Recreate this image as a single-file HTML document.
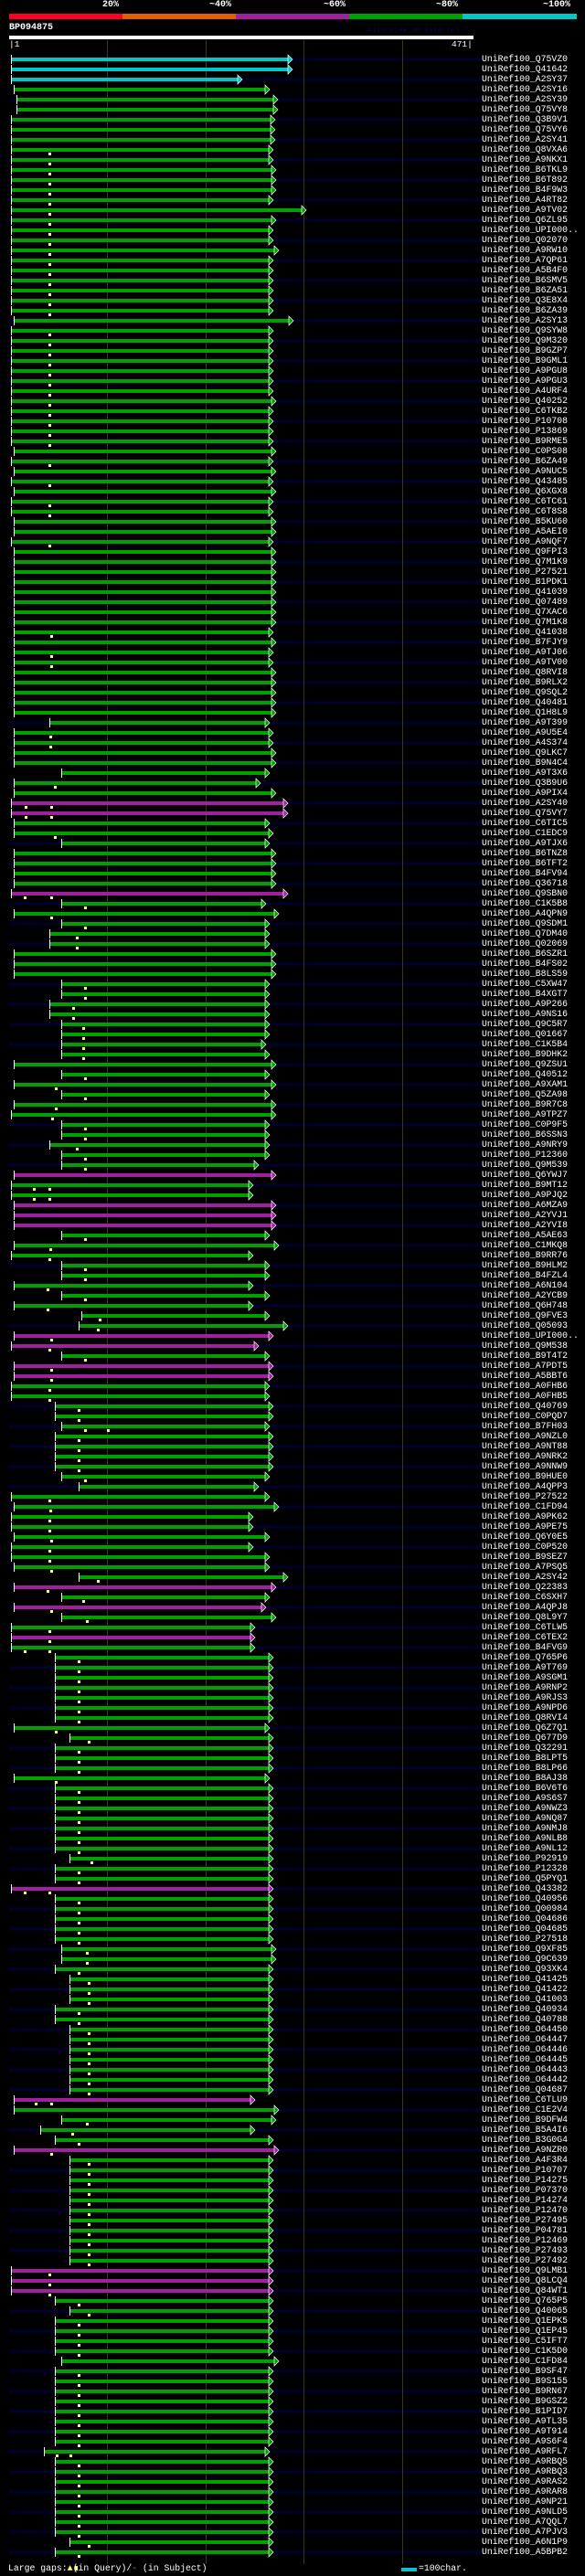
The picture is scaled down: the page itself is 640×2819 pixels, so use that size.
<!DOCTYPE html>
<html><head><meta charset="utf-8">
<style>
html,body{margin:0;padding:0;background:#000;}
body{width:640px;height:2819px;position:relative;overflow:hidden;font-family:"Liberation Mono",monospace;color:#fff;}
.t{position:absolute;white-space:nowrap;}
#labels{position:absolute;left:527px;top:59px;margin:0;font:9.8px/11px "Liberation Mono",monospace;color:#fff;}
svg{position:absolute;left:0;top:0;}
</style></head><body>
<svg id="s" width="640" height="2819" xmlns="http://www.w3.org/2000/svg"></svg>
<div class="t" style="left:112px;top:0px;font:bold 10px 'Liberation Mono',monospace;">20%</div>
<div class="t" style="left:229px;top:0px;font:bold 10px 'Liberation Mono',monospace;">~40%</div>
<div class="t" style="left:354px;top:0px;font:bold 10px 'Liberation Mono',monospace;">~60%</div>
<div class="t" style="left:477px;top:0px;font:bold 10px 'Liberation Mono',monospace;">~80%</div>
<div class="t" style="left:594px;top:0px;font:bold 10px 'Liberation Mono',monospace;">~100%</div>
<div class="t" style="left:10px;top:25px;font:bold 10px 'Liberation Mono',monospace;">BP094875</div>
<div class="t" style="left:402px;top:29px;font:8px 'Liberation Mono',monospace;color:#0a0a40;">AlignView.pm Beta rel.7</div>
<div class="t" style="left:10px;top:43px;font:9.5px 'Liberation Mono',monospace;">|1</div>
<div class="t" style="left:494px;top:43px;font:9.5px 'Liberation Mono',monospace;">471|</div>
<pre id="labels">UniRef100_Q75VZ0
UniRef100_Q41642
UniRef100_A2SY37
UniRef100_A2SY16
UniRef100_A2SY39
UniRef100_Q75VY8
UniRef100_Q3B9V1
UniRef100_Q75VY6
UniRef100_A2SY41
UniRef100_Q8VXA6
UniRef100_A9NKX1
UniRef100_B6TKL9
UniRef100_B6T892
UniRef100_B4F9W3
UniRef100_A4RT82
UniRef100_A9TV02
UniRef100_Q6ZL95
UniRef100_UPI000..
UniRef100_Q02070
UniRef100_A9RW10
UniRef100_A7QP61
UniRef100_A5B4F0
UniRef100_B6SMV5
UniRef100_B6ZA51
UniRef100_Q3E8X4
UniRef100_B6ZA39
UniRef100_A2SY13
UniRef100_Q9SYW8
UniRef100_Q9M320
UniRef100_B9GZP7
UniRef100_B9GML1
UniRef100_A9PGU8
UniRef100_A9PGU3
UniRef100_A4URF4
UniRef100_Q40252
UniRef100_C6TKB2
UniRef100_P10708
UniRef100_P13869
UniRef100_B9RME5
UniRef100_C0PS08
UniRef100_B6ZA49
UniRef100_A9NUC5
UniRef100_Q43485
UniRef100_Q6XGX8
UniRef100_C6TC61
UniRef100_C6T8S8
UniRef100_B5KU60
UniRef100_A5AEI0
UniRef100_A9NQF7
UniRef100_Q9FPI3
UniRef100_Q7M1K9
UniRef100_P27521
UniRef100_B1PDK1
UniRef100_Q41039
UniRef100_Q07489
UniRef100_Q7XAC6
UniRef100_Q7M1K8
UniRef100_Q41038
UniRef100_B7FJY9
UniRef100_A9TJ06
UniRef100_A9TV00
UniRef100_Q8RVI8
UniRef100_B9RLX2
UniRef100_Q9SQL2
UniRef100_Q40481
UniRef100_Q1H8L9
UniRef100_A9T399
UniRef100_A9U5E4
UniRef100_A4S374
UniRef100_Q9LKC7
UniRef100_B9N4C4
UniRef100_A9T3X6
UniRef100_Q3B9U6
UniRef100_A9PIX4
UniRef100_A2SY40
UniRef100_Q75VY7
UniRef100_C6TIC5
UniRef100_C1EDC9
UniRef100_A9TJX6
UniRef100_B6TNZ8
UniRef100_B6TFT2
UniRef100_B4FV94
UniRef100_Q36718
UniRef100_Q9SBN0
UniRef100_C1K5B8
UniRef100_A4QPN9
UniRef100_Q9SDM1
UniRef100_Q7DM40
UniRef100_Q02069
UniRef100_B6SZR1
UniRef100_B4FS02
UniRef100_B8LS59
UniRef100_C5XW47
UniRef100_B4XGT7
UniRef100_A9P266
UniRef100_A9NS16
UniRef100_Q9C5R7
UniRef100_Q01667
UniRef100_C1K5B4
UniRef100_B9DHK2
UniRef100_Q9ZSU1
UniRef100_Q40512
UniRef100_A9XAM1
UniRef100_Q5ZA98
UniRef100_B9R7C8
UniRef100_A9TPZ7
UniRef100_C0P9F5
UniRef100_B6SSN3
UniRef100_A9NRY9
UniRef100_P12360
UniRef100_Q9M539
UniRef100_Q6YWJ7
UniRef100_B9MT12
UniRef100_A9PJQ2
UniRef100_A6MZA9
UniRef100_A2YVJ1
UniRef100_A2YVI8
UniRef100_A5AE63
UniRef100_C1MKQ8
UniRef100_B9RR76
UniRef100_B9HLM2
UniRef100_B4FZL4
UniRef100_A6N104
UniRef100_A2YCB9
UniRef100_Q6H748
UniRef100_Q9FVE3
UniRef100_Q05093
UniRef100_UPI000..
UniRef100_Q9M538
UniRef100_B9T4T2
UniRef100_A7PDT5
UniRef100_A5BBT6
UniRef100_A0FHB6
UniRef100_A0FHB5
UniRef100_Q40769
UniRef100_C0PQD7
UniRef100_B7FH03
UniRef100_A9NZL0
UniRef100_A9NT88
UniRef100_A9NRK2
UniRef100_A9NNW9
UniRef100_B9HUE0
UniRef100_A4QPP3
UniRef100_P27522
UniRef100_C1FD94
UniRef100_A9PK62
UniRef100_A9PE75
UniRef100_Q6Y0E5
UniRef100_C0P520
UniRef100_B9SEZ7
UniRef100_A7PSQ5
UniRef100_A2SY42
UniRef100_Q22383
UniRef100_C6SXH7
UniRef100_A4QPJ8
UniRef100_Q8L9Y7
UniRef100_C6TLW5
UniRef100_C6TEX2
UniRef100_B4FVG9
UniRef100_Q765P6
UniRef100_A9T769
UniRef100_A9SGM1
UniRef100_A9RNP2
UniRef100_A9RJS3
UniRef100_A9NPD6
UniRef100_Q8RVI4
UniRef100_Q6Z7Q1
UniRef100_Q677D9
UniRef100_Q32291
UniRef100_B8LPT5
UniRef100_B8LP66
UniRef100_B8AJ38
UniRef100_B6V6T6
UniRef100_A9S6S7
UniRef100_A9NWZ3
UniRef100_A9NQ87
UniRef100_A9NMJ8
UniRef100_A9NLB8
UniRef100_A9NL12
UniRef100_P92919
UniRef100_P12328
UniRef100_Q5PYQ1
UniRef100_Q43382
UniRef100_Q40956
UniRef100_Q00984
UniRef100_Q04686
UniRef100_Q04685
UniRef100_P27518
UniRef100_Q9XF85
UniRef100_Q9C639
UniRef100_Q93XK4
UniRef100_Q41425
UniRef100_Q41422
UniRef100_Q41003
UniRef100_Q40934
UniRef100_Q40788
UniRef100_O64450
UniRef100_O64447
UniRef100_O64446
UniRef100_O64445
UniRef100_O64443
UniRef100_O64442
UniRef100_Q04687
UniRef100_C6TLU9
UniRef100_C1E2V4
UniRef100_B9DFW4
UniRef100_B5A4I6
UniRef100_B3G0G4
UniRef100_A9NZR0
UniRef100_A4F3R4
UniRef100_P10707
UniRef100_P14275
UniRef100_P07370
UniRef100_P14274
UniRef100_P12470
UniRef100_P27495
UniRef100_P04781
UniRef100_P12469
UniRef100_P27493
UniRef100_P27492
UniRef100_Q9LMB1
UniRef100_Q8LCQ4
UniRef100_Q84WT1
UniRef100_Q765P5
UniRef100_Q40065
UniRef100_Q1EPK5
UniRef100_Q1EP45
UniRef100_C5IFT7
UniRef100_C1K5D0
UniRef100_C1FD84
UniRef100_B9SF47
UniRef100_B9S155
UniRef100_B9RN67
UniRef100_B9GSZ2
UniRef100_B1PID7
UniRef100_A9TL35
UniRef100_A9T914
UniRef100_A9S6F4
UniRef100_A9RFL7
UniRef100_A9RBQ5
UniRef100_A9RBQ3
UniRef100_A9RAS2
UniRef100_A9RAR8
UniRef100_A9NP21
UniRef100_A9NLD5
UniRef100_A7QQL7
UniRef100_A7PJV3
UniRef100_A6N1P9
UniRef100_A5BPB2</pre>
<div class="t" style="left:9px;top:2805px;font:9.8px 'Liberation Mono',monospace;">Large gaps:<span style="color:#ffff66">&#9650;</span>(in Query)/<span style="color:#00c8c8">-</span> (in Subject)</div>
<div class="t" style="left:439px;top:2810px;width:17px;height:4px;background:#00c8c8;"></div>
<div class="t" style="left:458px;top:2805px;font:9.8px 'Liberation Mono',monospace;">=100char.</div>
<script>
var rows=[];
function R(a,b,c,s,e,g){for(var i=a;i<=b;i++)rows[i]=[c,s,e,g||[]];}
R(0,1,'C',12,315);R(2,2,'C',12,260);R(3,3,'G',15,290);R(4,5,'G',18,299);
R(6,8,'G',12,296);R(9,39,'G',12,294,[54]);R(11,13,'G',12,297,[54]);R(15,15,'G',12,330,[54]);
R(16,16,'G',12,297,[54]);R(19,19,'G',12,300,[54]);R(26,26,'G',15,316);R(34,34,'G',12,297,[54]);R(39,39,'G',15,297);
R(40,65,'G',15,297);R(40,40,'G',12,294,[54]);R(42,42,'G',12,294,[54]);R(44,45,'G',12,294,[54]);R(48,48,'G',12,294,[54]);
R(57,57,'G',15,294,[56]);R(59,60,'G',15,294,[56]);
R(66,66,'G',54,290);R(67,70,'G',15,294,[55]);R(69,70,'G',15,297);R(71,71,'G',67,290);R(72,72,'G',15,280,[60]);R(73,73,'G',15,297);
R(74,75,'M',12,310,[28,56]);R(76,76,'G',15,290);R(77,77,'G',15,294,[60]);R(78,78,'G',67,290);R(79,82,'G',15,297);
R(83,83,'M',12,310,[27,56]);R(84,84,'G',67,286,[93]);R(85,85,'G',15,300,[56]);R(86,86,'G',67,290,[93]);R(87,88,'G',54,290,[84]);
R(89,91,'G',15,297);R(92,93,'G',67,290,[93]);R(94,95,'G',54,290,[80]);R(96,97,'G',67,290,[91]);R(98,98,'G',67,286,[91]);R(99,99,'G',67,290,[91]);
R(100,100,'G',15,297);R(101,101,'G',67,290,[93]);R(102,102,'G',15,297,[61]);R(103,103,'G',67,290,[93]);R(104,104,'G',15,297,[61]);R(105,105,'G',12,297,[57]);
R(106,107,'G',67,290,[93]);R(108,108,'G',54,290,[84]);R(109,109,'G',67,290,[93]);R(110,110,'G',67,278,[93]);R(111,111,'M',15,297);
R(112,113,'G',12,272,[37,54]);R(114,116,'M',15,297);R(117,117,'G',67,290,[93]);R(118,118,'G',15,300,[55]);R(119,119,'G',12,272,[54]);
R(120,121,'G',67,290,[93]);R(122,122,'G',15,272,[52]);R(123,123,'G',67,290,[93]);R(124,124,'G',15,272,[52]);R(125,125,'G',89,290,[109]);
R(126,126,'G',86,310,[107]);R(127,127,'M',15,294,[56]);R(128,128,'M',12,278,[54]);R(129,129,'G',67,290,[93]);R(130,131,'M',15,294,[56]);
R(132,133,'G',12,290,[54]);R(134,135,'G',60,294,[86]);R(136,136,'G',67,290,[93,118]);R(137,140,'G',60,294,[86]);R(141,141,'G',67,290,[93]);
R(142,142,'G',86,278);R(143,143,'G',12,290,[54]);R(144,144,'G',15,300,[55]);R(145,146,'G',12,272,[54]);R(147,147,'G',15,290,[56]);R(148,148,'G',12,272,[54]);
R(149,149,'G',12,290,[54]);R(150,150,'G',15,290,[56]);R(151,151,'G',86,310,[107]);R(152,152,'M',15,297,[52]);R(153,153,'G',67,290,[91]);
R(154,154,'M',15,286,[56]);R(155,155,'G',67,297,[95]);R(156,156,'G',12,274,[54]);R(157,157,'M',12,274,[54]);R(158,158,'G',12,274,[27,54]);
R(159,165,'G',60,294,[86]);R(166,166,'G',15,290,[61]);R(167,167,'G',76,294,[97]);R(168,170,'G',60,294,[86]);R(171,171,'G',15,290,[61]);
R(172,178,'G',60,294,[86]);R(179,179,'G',76,294,[100]);R(180,181,'G',60,294,[86]);R(182,182,'M',12,294,[27,54]);R(183,187,'G',60,294,[86]);
R(188,189,'G',67,297,[95]);R(190,190,'G',60,294,[86]);R(191,193,'G',76,294,[97]);R(194,195,'G',60,294,[86]);R(196,202,'G',76,294,[97]);
R(203,203,'M',15,274,[39,56]);R(204,204,'G',15,300);R(205,205,'G',67,297,[95]);R(206,206,'G',44,274,[79]);R(207,207,'G',60,294,[86]);
R(208,208,'M',15,300,[56]);R(209,219,'G',76,294,[97]);R(220,222,'M',12,294,[54]);R(223,223,'G',60,294,[86]);R(224,224,'G',76,294,[97]);
R(225,228,'G',60,294,[86]);R(229,229,'G',67,300);R(230,237,'G',60,294,[86]);R(238,238,'G',48,290,[62,77]);R(239,246,'G',60,294,[86]);
R(247,247,'G',76,294,[97]);R(248,248,'G',60,294,[86]);
var col={G:'#00a000',C:'#00c8c8',M:'#a020a0'};
var h='';
h+='<rect x="10" y="15" width="124" height="6" fill="#ff0022"/><rect x="134" y="15" width="124" height="6" fill="#e06000"/><rect x="258" y="15" width="124" height="6" fill="#a020a0"/><rect x="382" y="15" width="124" height="6" fill="#00a000"/><rect x="506" y="15" width="125" height="6" fill="#00c8c8"/>';
h+='<rect x="10" y="39" width="508" height="4" fill="#fff"/>';
for(var i=0;i<249;i+=2){var y=65+11*i;h+='<rect x="10" y="'+(y-1.5)+'" width="517" height="3" fill="#000030"/>';}
[117,225,332,440].forEach(function(x){h+='<rect x="'+x+'" y="44" width="1" height="2762" fill="#3a3a12"/>';});
for(var i=0;i<249;i++){var r=rows[i],y=65+11*i,c=col[r[0]];
h+='<rect x="'+r[1]+'" y="'+(y-2)+'" width="'+(r[2]-r[1])+'" height="4" fill="'+c+'"/>';
h+='<rect x="'+r[1]+'" y="'+(y-5)+'" width="1" height="10" fill="#fff"/>';
h+='<polygon points="'+r[2]+','+(y-5)+' '+(r[2]+5)+','+y+' '+r[2]+','+(y+5)+'" fill="'+c+'" stroke="#fff" stroke-width="0.7"/>';
r[3].forEach(function(g){h+='<rect x="'+(g-1)+'" y="'+(y+3)+'" width="3" height="3" fill="#ffff66"/>';});}
h+='<rect x="82" y="2808" width="3" height="5" fill="#ffff66"/>';
document.getElementById('s').innerHTML=h;
</script>
</body></html>
